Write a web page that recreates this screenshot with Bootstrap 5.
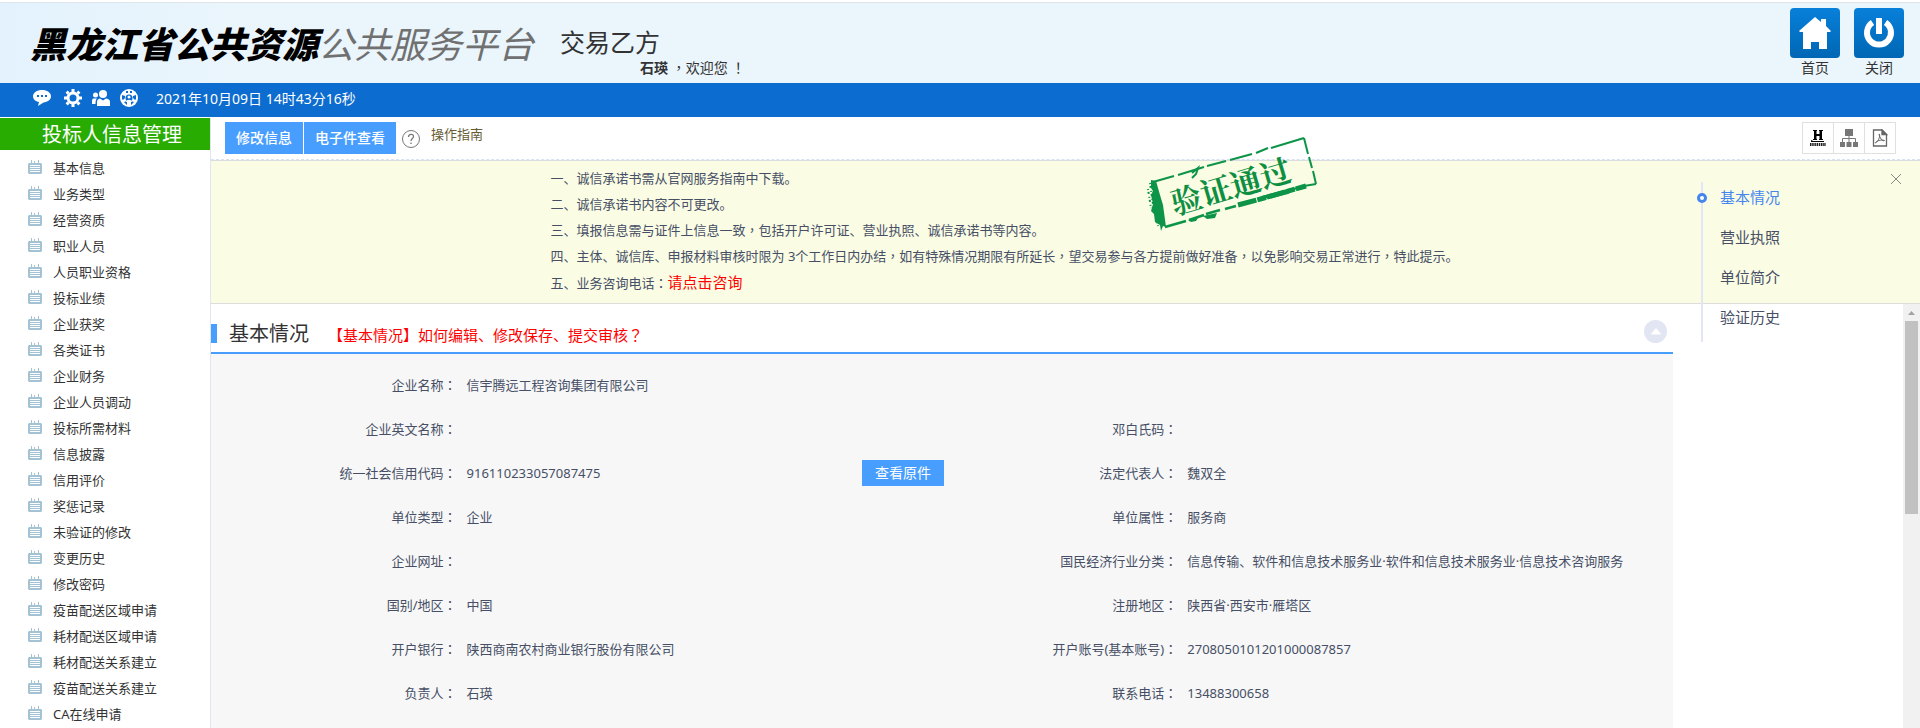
<!DOCTYPE html>
<html lang="zh-CN">
<head>
<meta charset="utf-8">
<meta name="viewport" content="width=device-width, initial-scale=1">
<title>黑龙江省公共资源公共服务平台</title>
<link href="https://cdn.jsdelivr.net/npm/bootstrap@5.3.0/dist/css/bootstrap.min.css" rel="stylesheet">
<style>
body{font-family:"Noto Sans","Noto Sans CJK SC",sans-serif;font-size:13px;line-height:26px;color:#333;background:#fff;overflow:hidden}
a{color:inherit;text-decoration:none}
.mid{font-family:"Noto Sans CJK TC",sans-serif}
.site-head{margin-top:2px;height:81px;border-top:1px solid #dfe5ea;background:linear-gradient(90deg,#e3f2fd,#eaf5fc 12%)}
.site-name{font:italic 900 36px/48px "Noto Sans CJK SC",sans-serif;color:#000;padding-left:30px;margin-top:15px}
.site-name span{font-weight:400;color:#707070}
.role{font-size:25px;line-height:30px;margin-top:24px;color:#333}
.who{margin-left:26px}
.welcome{font-size:14px;line-height:20px;padding-left:80px}
.tile{width:50px;height:50px;border-radius:4px;background:linear-gradient(#0880da,#0067b4)}
.head-link{font-size:14px;line-height:20px;padding-top:5px;gap:14px}
.info-bar{height:34px;background:#0c6ccf;color:#fff;padding-left:33px;font-size:14px;margin-bottom:1px}
.info-bar time{margin-left:18px;padding-bottom:3px}
.side{width:211px;border-right:1px solid #dfe6f2}
.side-title{height:32px;line-height:33px;font-size:20px;background:#28ac02;color:#fff;padding-left:42px;width:210px}
.side li a{height:26px;padding-left:28px;gap:11px}
.side ul{padding-top:5px}
.side svg{margin-bottom:2px}
.tools{height:42px;padding:4px 24px 0 14px;border-bottom:1px dashed #d9e2f2}
.tools .btn{font-size:14px;font-weight:500;line-height:32px;height:32px;padding:0 11px;border:0;border-radius:0;background:#489eff;color:#fff}
.guide{color:#675d34;line-height:24px;gap:11px;margin-left:6px}
.square{width:32px;height:32px;border:1px solid #e0e0e0;background:#fff;padding:0;margin-left:-1px}
.notice{background:#fafce4;border-top:1px solid #d9dce0;border-bottom:1px solid #ddd;padding:4px 0 7px;color:#464f66}
.notice ol{max-width:1030px}
.notice a{color:red;font-size:15px}
.stamp{left:933px;top:16px;width:176px;height:100px}
.anchors{left:1490px;top:59px;font-size:15px;line-height:40px;color:#464f66;padding-left:19px}
.anchors::before{content:"";position:absolute;left:0;top:5px;width:2px;height:160px;background:#e2e6f2}
.anchors .active{color:#4586ee}
.anchors .active::before{content:"";position:absolute;left:-23px;top:16px;width:10px;height:10px;border:3px solid #4586ee;border-radius:50%;background:#fff}
.shut{right:19px;top:56px;border:0;background:none;padding:0;width:10px;height:10px}
.panel{margin-right:230px;background:#f7f7f7}
.sect-head{height:50px;border-bottom:2px solid #489eff;padding-right:6px;background:#fff}
.sect-head .bar{width:6px;height:19px;background:#489eff;margin-top:20px}
.sect-head h2{font-size:20px;line-height:30px;margin:0 0 0 12px;font-weight:400;padding-top:15px}
.sect-head a{color:red;font-size:15px;margin-left:19px;padding-top:18px}
.fold{width:23px;height:23px;border-radius:50%;border:0;padding:0;background:#e2e6f2;margin-top:16px}
.fields{display:grid;grid-template-columns:17% 33% 16.3% 1fr;grid-auto-rows:44px;align-items:center;padding-top:9px;margin:0;color:#464f66}
.fields dt{font-weight:400;text-align:right;padding-right:3px}
.fields dd{margin:0;padding-left:7px}
.fields .wide{grid-column:span 3}
.fields .btn{background:#489eff;color:#fff;border:0;border-radius:0;font-size:14px;line-height:26px;padding:0 13px;margin-right:-2px}
.track{width:17px;background:#f1f1f1;padding:0 2px}
.track svg{width:13px;height:17px}
.thumb{height:193px;background:#c1c1c1}
</style>
</head>
<body class="vh-100 d-flex flex-column">
<svg class="d-none">
  <symbol id="note" viewBox="0 0 14 14"><path fill="#a3c2d4" d="M1 3h2V0h1v3h2V1h1v2h3V0h1v3h2l1 1v9l-1 1H1l-1-1V4z"/><path stroke="#fff" d="M2 5.500h10M2 7.500h10M2 9.500h10M2 11.500h10"/></symbol>
</svg>
<header class="site-head d-flex flex-shrink-0">
  <h1 class="site-name mb-0 text-nowrap">黑龙江省公共资源<span>公共服务平台</span></h1>
  <div class="who text-nowrap">
    <div class="role">交易乙方</div>
    <div class="welcome"><b>石瑛</b> <span class="mid" lang="zh-TW">，</span>欢迎您 <span class="mid" lang="zh-TW">！</span></div>
  </div>
  <nav class="head-link ms-auto d-flex text-center me-3">
    <a href="#" class="d-block"><span class="tile d-flex align-items-center justify-content-center"><svg width="32" height="32" viewBox="0 0 32 32" fill="#fff"><path d="M16 0 22 5V2h5v7l5 5-1 1h-3v17h-8v-7h-8v7H4V15H1l-1-1z"/></svg></span>首页</a>
    <a href="#" class="d-block"><span class="tile d-flex align-items-center justify-content-center"><svg width="32" height="32" viewBox="0 0 32 32" fill="none" stroke="#fff" stroke-width="6"><path d="M9.500 5.500a12 12 0 1 0 13 0"/><path d="M16 1v16"/></svg></span>关闭</a>
  </nav>
</header>
<div class="info-bar d-flex align-items-center flex-shrink-0">
  <a href="#" class="d-flex pb-1" aria-label="消息"><svg width="18" height="18" viewBox="0 0 18 18"><path fill="#fff" d="M9 1c5 0 9 2.600 9 6.300 0 3.500-3.500 5.900-7.500 6.200L5 17l1-4C2.500 12.500 0 10.300 0 7.300 0 3.600 4 1 9 1z"/><path fill="#0c6ccf" d="M4 6h2v2H4zM8 6h2v2H8zM12 6h2v2h-2z"/></svg></a>
  <a href="#" class="d-flex pb-1" aria-label="设置" style="margin-left:13px"><svg width="18" height="18" viewBox="0 0 18 18" fill="none" stroke="#fff"><circle cx="9" cy="9" r="5" stroke-width="3"/><path stroke-width="3" d="M9 0v3M9 15v3M0 9h3M15 9h3M2.600 2.600l2 2M13.400 13.400l2 2M2.600 15.400l2-2M13.400 4.600l2-2"/></svg></a>
  <a href="#" class="d-flex pb-1" aria-label="用户" style="margin-left:10px"><svg width="18" height="18" viewBox="0 0 18 18" fill="#fff"><circle cx="11" cy="5" r="4"/><circle cx="3.500" cy="6" r="2.500"/><path d="M5 17v-4c0-2 1-3 3-3.500l3 2 3-2c3 .5 4 1.500 4 3.500v4zM0 15v-3c0-2 1-2.500 2-2.500h3c-1 1-1.500 2-1.500 5.500z"/></svg></a>
  <a href="#" class="d-flex pb-1" aria-label="协作" style="margin-left:10px"><svg width="18" height="18" viewBox="0 0 18 18"><circle cx="9" cy="9" r="9" fill="#fff"/><g fill="#0c6ccf"><path d="M6 2h2v2H6zM10 2h2v2h-2zM2 6l3 1v2L3 11l-1-1zM16 6l-3 1v2l2 2 1-1zM4 13l3-1v4zM14 13l-3-1v4z"/><circle cx="9" cy="9" r="3.500"/></g><circle cx="9" cy="8" r="1.500" fill="#fff"/><path fill="#fff" d="M6 13c0-3 6-3 6 0z"/></svg></a>
  <time class="text-nowrap">2021年10月09日 14时43分16秒</time>
</div>
<div class="d-flex flex-grow-1 overflow-hidden">
  <aside class="side flex-shrink-0">
    <div class="side-title">投标人信息管理</div>
    <ul class="list-unstyled mb-0">
      <li><a href="#" class="d-flex align-items-center"><svg width="14" height="14"><use href="#note"/></svg>基本信息</a></li>
      <li><a href="#" class="d-flex align-items-center"><svg width="14" height="14"><use href="#note"/></svg>业务类型</a></li>
      <li><a href="#" class="d-flex align-items-center"><svg width="14" height="14"><use href="#note"/></svg>经营资质</a></li>
      <li><a href="#" class="d-flex align-items-center"><svg width="14" height="14"><use href="#note"/></svg>职业人员</a></li>
      <li><a href="#" class="d-flex align-items-center"><svg width="14" height="14"><use href="#note"/></svg>人员职业资格</a></li>
      <li><a href="#" class="d-flex align-items-center"><svg width="14" height="14"><use href="#note"/></svg>投标业绩</a></li>
      <li><a href="#" class="d-flex align-items-center"><svg width="14" height="14"><use href="#note"/></svg>企业获奖</a></li>
      <li><a href="#" class="d-flex align-items-center"><svg width="14" height="14"><use href="#note"/></svg>各类证书</a></li>
      <li><a href="#" class="d-flex align-items-center"><svg width="14" height="14"><use href="#note"/></svg>企业财务</a></li>
      <li><a href="#" class="d-flex align-items-center"><svg width="14" height="14"><use href="#note"/></svg>企业人员调动</a></li>
      <li><a href="#" class="d-flex align-items-center"><svg width="14" height="14"><use href="#note"/></svg>投标所需材料</a></li>
      <li><a href="#" class="d-flex align-items-center"><svg width="14" height="14"><use href="#note"/></svg>信息披露</a></li>
      <li><a href="#" class="d-flex align-items-center"><svg width="14" height="14"><use href="#note"/></svg>信用评价</a></li>
      <li><a href="#" class="d-flex align-items-center"><svg width="14" height="14"><use href="#note"/></svg>奖惩记录</a></li>
      <li><a href="#" class="d-flex align-items-center"><svg width="14" height="14"><use href="#note"/></svg>未验证的修改</a></li>
      <li><a href="#" class="d-flex align-items-center"><svg width="14" height="14"><use href="#note"/></svg>变更历史</a></li>
      <li><a href="#" class="d-flex align-items-center"><svg width="14" height="14"><use href="#note"/></svg>修改密码</a></li>
      <li><a href="#" class="d-flex align-items-center"><svg width="14" height="14"><use href="#note"/></svg>疫苗配送区域申请</a></li>
      <li><a href="#" class="d-flex align-items-center"><svg width="14" height="14"><use href="#note"/></svg>耗材配送区域申请</a></li>
      <li><a href="#" class="d-flex align-items-center"><svg width="14" height="14"><use href="#note"/></svg>耗材配送关系建立</a></li>
      <li><a href="#" class="d-flex align-items-center"><svg width="14" height="14"><use href="#note"/></svg>疫苗配送关系建立</a></li>
      <li><a href="#" class="d-flex align-items-center"><svg width="14" height="14"><use href="#note"/></svg>CA在线申请</a></li>
    </ul>
  </aside>
  <main class="flex-grow-1 d-flex flex-column position-relative overflow-hidden">
    <div class="tools d-flex align-items-start flex-shrink-0">
      <button type="button" class="btn">修改信息</button>
      <button type="button" class="btn" style="margin-left:1px">电子件查看</button>
      <a href="#" class="guide d-flex"><svg class="mt-2" width="18" height="18" viewBox="0 0 18 18" fill="none" stroke="#777"><circle cx="9" cy="9" r="8.500"/><path stroke-width="1.300" d="M6.500 7c0-3.500 5-3.500 5-.5C11.500 8.500 9 8.500 9 11M9 12.500V14"/></svg><span>操作指南</span></a>
      <div class="ms-auto d-flex">
        <button type="button" class="square d-flex align-items-center justify-content-center" aria-label="历史"><svg width="16" height="18" viewBox="0 0 16 18"><path d="M3 1h4v1H6.500v3h3V2H9V1h4v1h-1v8h1v1H9v-1h.5V7h-3v3H7v1H3v-1h1V2H3zM1 8v3l2 1h11v1H1z"/><path stroke="#222" stroke-width="3" stroke-dasharray="1.500 .7" d="M0 15.500h16"/></svg></button>
        <button type="button" class="square d-flex align-items-center justify-content-center" aria-label="流程"><svg width="18" height="18" viewBox="0 0 18 18"><path fill="#777" d="M5 0h8v7H5zM0 13h5v5H0zM6.500 13h5v5h-5zM13 13h5v5h-5z"/><path fill="none" stroke="#777" d="M9 6v8M2.500 14V9.500h13V14"/></svg></button>
        <button type="button" class="square d-flex align-items-center justify-content-center" aria-label="PDF"><svg width="16" height="18" viewBox="0 0 16 18" fill="none" stroke="#666" stroke-width="1.300"><path d="M1.500 1H10l4.500 4.500V17h-13z"/><path fill="#666" d="M10 1v4.500h4.500z"/><path d="M7 5c2 0-.5 8-3.500 9-1-1 5-4 9-2.500-2 1.500-5-3-5.500-6.500z" stroke-width="1"/></svg></button>
      </div>
    </div>
    <section class="notice flex-shrink-0">
      <ol class="list-unstyled mx-auto mb-0">
        <li>一、诚信承诺书需从官网服务指南中下载。</li>
        <li>二、诚信承诺书内容不可更改。</li>
        <li>三、填报信息需与证件上信息一致<span class="mid" lang="zh-TW">，</span>包括开户许可证、营业执照、诚信承诺书等内容。</li>
        <li>四、主体、诚信库、申报材料审核时限为 3个工作日内办结<span class="mid" lang="zh-TW">，</span>如有特殊情况期限有所延长<span class="mid" lang="zh-TW">，</span>望交易参与各方提前做好准备<span class="mid" lang="zh-TW">，</span>以免影响交易正常进行<span class="mid" lang="zh-TW">，</span>特此提示。</li>
        <li>五、业务咨询电话<span class="mid" lang="zh-TW">：</span><a href="#">请点击咨询</a></li>
      </ol>
    </section>
    <div class="d-flex flex-grow-1 overflow-hidden">
      <div class="flex-grow-1 d-flex flex-column">
        <div class="panel flex-grow-1">
          <div class="sect-head d-flex align-items-start">
            <span class="bar"></span>
            <h2>基本情况</h2>
            <a href="#">【基本情况】如何编辑、修改保存、提交审核<span class="mid" lang="zh-TW">？</span></a>
            <button type="button" class="fold ms-auto d-flex align-items-center justify-content-center" aria-label="收起"><svg width="12" height="8"><path fill="#fff" d="M6 0l5.500 6.500h-11z"/></svg></button>
          </div>
          <dl class="fields">
            <dt>企业名称<span class="mid" lang="zh-TW">：</span></dt><dd class="wide">信宇腾远工程咨询集团有限公司</dd>
            <dt>企业英文名称<span class="mid" lang="zh-TW">：</span></dt><dd></dd>
            <dt>邓白氏码<span class="mid" lang="zh-TW">：</span></dt><dd></dd>
            <dt>统一社会信用代码<span class="mid" lang="zh-TW">：</span></dt><dd class="d-flex justify-content-between">916110233057087475<button type="button" class="btn">查看原件</button></dd>
            <dt>法定代表人<span class="mid" lang="zh-TW">：</span></dt><dd>魏双全</dd>
            <dt>单位类型<span class="mid" lang="zh-TW">：</span></dt><dd>企业</dd>
            <dt>单位属性<span class="mid" lang="zh-TW">：</span></dt><dd>服务商</dd>
            <dt>企业网址<span class="mid" lang="zh-TW">：</span></dt><dd></dd>
            <dt>国民经济行业分类<span class="mid" lang="zh-TW">：</span></dt><dd>信息传输、软件和信息技术服务业·软件和信息技术服务业·信息技术咨询服务</dd>
            <dt>国别/地区<span class="mid" lang="zh-TW">：</span></dt><dd>中国</dd>
            <dt>注册地区<span class="mid" lang="zh-TW">：</span></dt><dd>陕西省·西安市·雁塔区</dd>
            <dt>开户银行<span class="mid" lang="zh-TW">：</span></dt><dd>陕西商南农村商业银行股份有限公司</dd>
            <dt>开户账号(基本账号)<span class="mid" lang="zh-TW">：</span></dt><dd>2708050101201000087857</dd>
            <dt>负责人<span class="mid" lang="zh-TW">：</span></dt><dd>石瑛</dd>
            <dt>联系电话<span class="mid" lang="zh-TW">：</span></dt><dd>13488300658</dd>
          </dl>
        </div>
      </div>
      <div class="track flex-shrink-0 d-flex flex-column" aria-hidden="true"><svg viewBox="0 0 13 17"><path fill="#a3a3a3" d="M6.500 7l3.500 4H3z"/></svg><div class="thumb"></div></div>
    </div>
    <nav class="anchors position-absolute">
      <a href="#" class="active d-block position-relative">基本情况</a>
      <a href="#" class="d-block">营业执照</a>
      <a href="#" class="d-block">单位简介</a>
      <a href="#" class="d-block">验证历史</a>
    </nav>
    <button type="button" class="shut position-absolute d-flex" aria-label="关闭导航"><svg width="10" height="10" stroke="#888"><path d="M0 0l10 10M10 0L0 10"/></svg></button>
    <svg class="stamp position-absolute" viewBox="0 0 176 100" fill="none" stroke="#0d9448">
      <path stroke-width="2" d="M9 48 30 42M34 41 60 33M63 32 82 27M86 26 108 20M112 19 124 14M127 14 160 4M160 4 164 20M165 23 168 34M169 37 172 50"/>
      <path stroke-width="2.500" d="M21 93 42 87M45 86 60 81M62 80 76 76M81 75 92 72"/>
      <path stroke-width="5" stroke-dasharray="19 1 9 1" d="M94 71 120 64 162 52"/>
      <path stroke-width="2" d="M160 52 172 50M48 39l6-5-2 6-4 4"/>
      <path fill="#0d9448" stroke="none" d="M7 46l5 1 4 14 3 10 3 22-3-1-2 5-1-6-5-3-1-8-3-3 2-7-2-9 2-4-2-3zM44 86l10-2-2 3-5 1zM59 82l14-3-2 5-8 1zM118 62l30-8 8-1-12 7-20 5z"/>
      <path stroke-width="2" stroke-dasharray="1 2 2 3" d="M6 49 9 70 14 92M4 55 7 74"/>
      <text x="87" y="64" text-anchor="middle" font-family="'Noto Serif CJK SC','Noto Sans CJK SC',serif" font-weight="700" font-size="31" fill="#0d8f42" stroke="none" transform="rotate(-16.500 87 53)">验证通过</text>
    </svg>
  </main>
</div>
<script src="https://cdn.jsdelivr.net/npm/bootstrap@5.3.0/dist/js/bootstrap.bundle.min.js"></script>
</body>
</html>
